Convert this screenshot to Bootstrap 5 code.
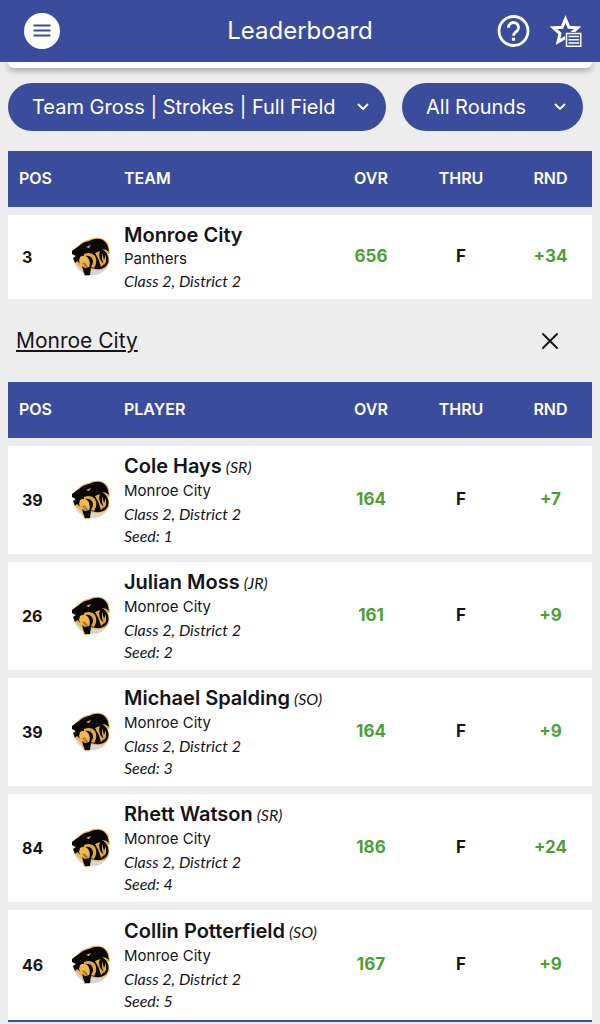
<!DOCTYPE html>
<html lang="en">
<head>
<meta charset="utf-8">
<meta name="viewport" content="width=device-width, initial-scale=1">
<title>Leaderboard</title>
<link href="https://cdn.jsdelivr.net/npm/bootstrap@5.3.0/dist/css/bootstrap.min.css" rel="stylesheet">
<style>
  :root { --brand: #3c4c9c; --ink: #151517; --score: #4c9f35; }
  body { background: #ededed; color: var(--ink); font-family: Inter, "Liberation Sans", sans-serif; }
  .top-bar { background: var(--brand); height: 62px; padding: 0 16px 0 24px; }
  .top-title { font-size: 24px; line-height: 32px; }
  .menu-btn { width: 36px; height: 36px; }
  .tool-link { width: 36px; height: 36px; }
  .sheet-edge { height: 6px; border-radius: 0 0 8px 8px; box-shadow: 0 2px 6px rgba(0,0,0,.4); }
  .filters { padding: 15px 9px 0 0; }
  .pill-wrap { position: relative; }
  .pill { appearance: none; background: var(--brand); color: #fff; border: 0; border-radius: 24px; height: 48px; width: 100%; padding: 0 48px 0 24px; font-size: 20px; font-weight: 400; }
  .pill-wrap svg { position: absolute; right: 17px; top: 18px; pointer-events: none; }
  .pill-main { flex: 378 1 0; }
  .pill-side { flex: 181 1 0; }
  .board { border-collapse: separate; border-spacing: 0 8px; table-layout: fixed; width: 100%; }
  .board th { background: var(--brand); color: #fff; height: 56px; padding-bottom: 3px; font-size: 16px; font-weight: 600; }
  .board td { background: #fff; }
  .c-pos { width: 57px; } .c-logo { width: 53px; } .c-ovr { width: 84px; } .c-thru { width: 96px; } .c-rnd { width: 83px; }
  .board th:first-child { padding-left: 11px; }
  .board td:first-child { padding-left: 14px; }
  .board td.who, .board th.who { padding-left: 6px; white-space: nowrap; }
  .num { font-size: 17px; font-weight: 700; }
  .pos-num { font-size: 16px; font-weight: 700; }
  .good { color: var(--score); }
  .team-row td { height: 84px; }
  .player-row td { height: 108px; }
  .player-row:last-child td { height: 112px; border-bottom: 2px solid var(--brand); }
  .who-name { font-size: 20px; font-weight: 600; line-height: 26px; }
  .who-sub { font-size: 15px; line-height: 22px; }
  .player-row .who-sub { line-height: 24px; }
  .slant { font-family: Lato, sans-serif; font-style: italic; font-weight: 400; font-size: 16px; line-height: 22px; }
  .picked { padding: 0 25px 0 8px; height: 67px; }
  .picked a { font-size: 21px; color: var(--ink); }
</style>
</head>
<body>
<svg width="0" height="0" class="position-absolute" aria-hidden="true">
  <symbol id="panther" viewBox="1 1 40 40">
    <circle cx="21" cy="21" r="18.500" fill="#d6d6da"/>
    <path d="M0 0H42V15L39 25Q24 27 4 26L0 26Z" fill="#fff"/>
    <path d="M1 15Q4 12 7 10Q11 5 17 4Q25 0 32 3Q38 6 38 12L39 17L37 18Q40 25 36 31Q31 35 24 34L19 33L18 40H13L11 33L5 28L2 23L4 20L1 18Z" fill="#eeb54e"/>
    <path d="M1 15Q5 12 8 10Q12 6 18 5Q26 1 32 4Q37 7 38 16L33 14Q39 20 37 27Q34 34 25 33L20 32L19 39H14L12 34L11 29L6 25L4 27L2 22L5 20L1 18Z" fill="#090807"/>
    <path d="M15 11 20 9 18 12Z" fill="#efb54f"/>
    <path d="M31 13Q35 13 38 16V18Q35 16 31 13Z" fill="#e9ad43"/>
    <path d="M13 18Q20 15 24 20Q27 26 23 32L20 31Q24 25 20 21Q17 19 13 20Z" fill="#e6a93f"/>
    <path d="M24 17 29 15Q27 20 30 25L33 28L30 31Q28 23 24 17ZM31 17 33 24 35 19 35 26 33 29 31 23Z" fill="#e6a93f"/>
    <path d="M9 21Q14 18 17 22Q20 26 18 31L14 32Q9 29 8 25Z" fill="#f0b850"/>
    <path d="M11 27Q15 25 17 31L14 31Z" fill="#b27e28"/>
  </symbol>
  <symbol id="chev" viewBox="0 0 12 12"><path d="M1.500 3.500 6 8 10.500 3.500" fill="none" stroke="#fff" stroke-width="1.800" stroke-linecap="round" stroke-linejoin="round"/></symbol>
</svg>

<header class="top-bar d-flex align-items-center justify-content-between position-relative text-white">
  <button type="button" class="menu-btn btn bg-white rounded-circle border-0 p-0 d-flex align-items-center justify-content-center" aria-label="Menu">
    <svg width="18" height="14" viewBox="0 0 18 14" stroke="#3c4c9c" stroke-width="1.800"><path d="M.5 1.500H17.500M.5 6.500H17.500M.5 11.500H17.500"/></svg>
  </button>
  <h1 class="top-title fw-normal m-0 position-absolute start-50 translate-middle-x">Leaderboard</h1>
  <nav class="d-flex gap-3" aria-label="Tools">
    <a href="#help" class="tool-link d-flex align-items-center justify-content-center" aria-label="Help">
      <svg width="34" height="34" viewBox="0 0 34 34" fill="none" stroke="#fff"><circle cx="16.500" cy="17" r="14.500" stroke-width="2.800"/><path d="M11.500 13.700A5 5 0 1 1 19.700 17.400C17.700 18.900 16.500 19.600 16.500 21.800" stroke-width="2.800"/><path d="M16.500 23.700V26.700" stroke-width="3.200"/></svg>
    </a>
    <a href="#favorites" class="tool-link d-flex align-items-center justify-content-center" aria-label="Favorites list">
      <svg width="34" height="34" viewBox="0 0 34 34"><path d="M16.500 5 19.900 13.200 28.600 13.800 22 19.500 24 28 16.500 23.500 9 28 11 19.500 4.400 13.800 13.100 13.200Z" fill="none" stroke="#fff" stroke-width="3"/><path d="M16 18H33V33H16Z" fill="#3c4c9c"/><path d="M17.500 19.500H31.700V32.200H17.500Z" fill="none" stroke="#fff" stroke-width="1.500"/><path d="M19.500 22.500H30M19.500 25.800H30M19.500 29H30" stroke="#fff" stroke-width="1.600"/></svg>
    </a>
  </nav>
</header>

<main class="px-2">
  <div class="sheet-edge bg-white"></div>
  <div class="filters d-flex gap-3">
    <div class="pill-wrap pill-main">
      <select class="pill" aria-label="Leaderboard type"><option>Team Gross | Strokes | Full Field</option></select>
      <svg width="12" height="12"><use href="#chev"/></svg>
    </div>
    <div class="pill-wrap pill-side">
      <select class="pill" aria-label="Round"><option>All Rounds</option></select>
      <svg width="12" height="12"><use href="#chev"/></svg>
    </div>
  </div>

  <table class="board mt-2 pt-1">
    <colgroup><col class="c-pos"><col class="c-logo"><col><col class="c-ovr"><col class="c-thru"><col class="c-rnd"></colgroup>
    <thead><tr><th scope="col" colspan="2">POS</th><th scope="col" class="who">TEAM</th><th scope="col" class="text-center">OVR</th><th scope="col" class="text-center">THRU</th><th scope="col" class="text-center">RND</th></tr></thead>
    <tbody>
      <tr class="team-row">
        <td class="pos-num">3</td>
        <td class="text-center"><svg width="40" height="40" role="img" aria-label="Panthers logo"><use href="#panther"/></svg></td>
        <td class="who"><div class="who-name">Monroe City</div><div class="who-sub">Panthers</div><div class="slant">Class 2, District 2</div></td>
        <td class="num good text-center">656</td><td class="num text-center">F</td><td class="num good text-center">+34</td>
      </tr>
    </tbody>
  </table>

  <div class="picked d-flex align-items-center justify-content-between">
    <a href="#monroe-city">Monroe City</a>
    <button type="button" class="btn border-0 p-2" aria-label="Close"><svg class="d-block" width="18" height="18" viewBox="0 0 18 18"><path d="M2 2 16 16M16 2 2 16" stroke="#151517" stroke-width="2" stroke-linecap="round"/></svg></button>
  </div>

  <table class="board">
    <colgroup><col class="c-pos"><col class="c-logo"><col><col class="c-ovr"><col class="c-thru"><col class="c-rnd"></colgroup>
    <thead><tr><th scope="col" colspan="2">POS</th><th scope="col" class="who">PLAYER</th><th scope="col" class="text-center">OVR</th><th scope="col" class="text-center">THRU</th><th scope="col" class="text-center">RND</th></tr></thead>
    <tbody id="players"></tbody>
  </table>
</main>

<script>
  const players = [
    [39, "Cole Hays", "SR", 164, "+7"],
    [26, "Julian Moss", "JR", 161, "+9"],
    [39, "Michael Spalding", "SO", 164, "+9"],
    [84, "Rhett Watson", "SR", 186, "+24"],
    [46, "Collin Potterfield", "SO", 167, "+9"]
  ];
  document.getElementById("players").innerHTML = players.map(([pos, name, year, ovr, rnd], i) => `
    <tr class="player-row">
      <td class="pos-num">${pos}</td>
      <td class="text-center"><svg width="40" height="40" role="img" aria-label="Panthers logo"><use href="#panther"/></svg></td>
      <td class="who"><div class="who-name d-flex align-items-baseline gap-1"><span>${name}</span><span class="slant">(${year})</span></div><div class="who-sub">Monroe City</div><div class="slant">Class 2, District 2</div><div class="slant">Seed: ${i + 1}</div></td>
      <td class="num good text-center">${ovr}</td><td class="num text-center">F</td><td class="num good text-center">${rnd}</td>
    </tr>`).join("");
</script>
<script src="https://cdn.jsdelivr.net/npm/bootstrap@5.3.0/dist/js/bootstrap.bundle.min.js"></script>
</body>
</html>
